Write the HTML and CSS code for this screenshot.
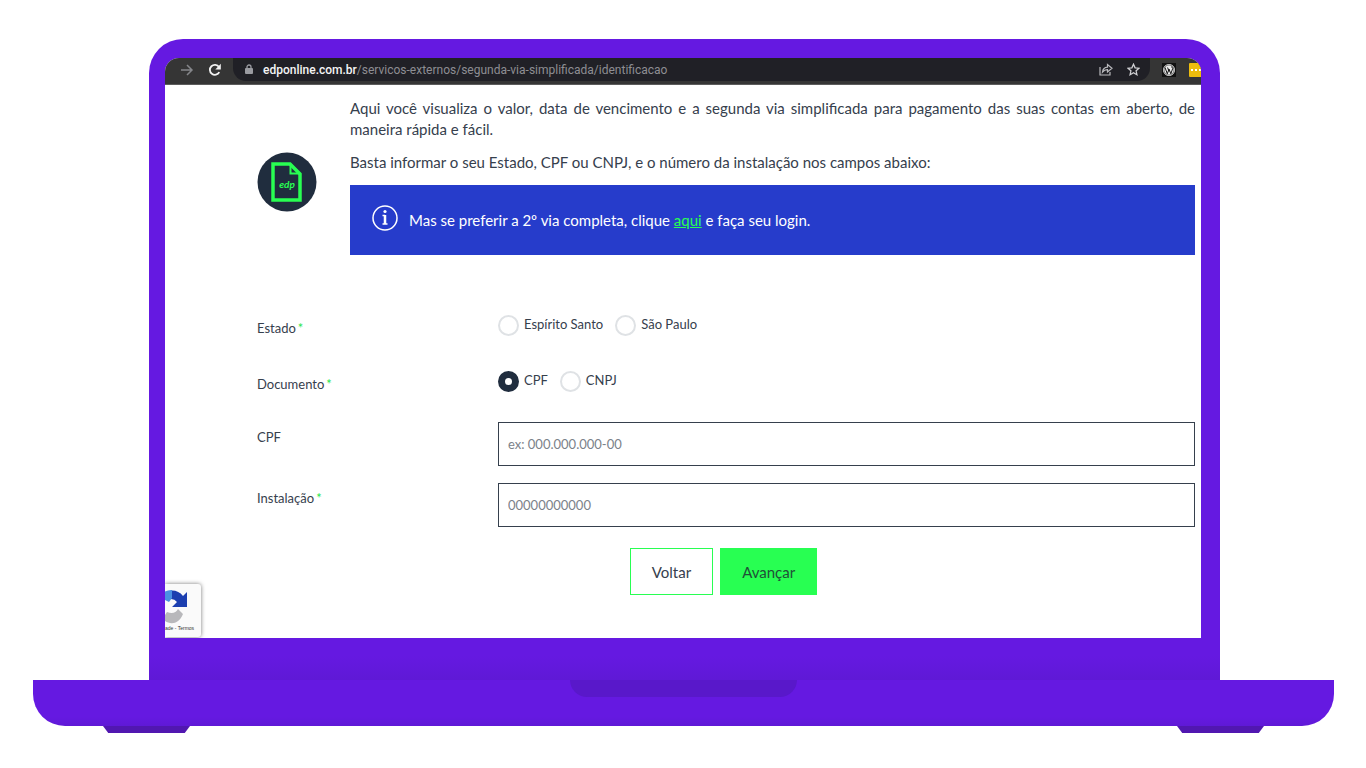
FILE: index.html
```html
<!DOCTYPE html>
<html lang="pt-BR">
<head>
<meta charset="utf-8">
<title>Segunda via simplificada</title>
<link rel="stylesheet" href="styles.css">
</head>
<body>
<div class="laptop">
  <div class="lid">
    <div class="screen">
      <header class="toolbar">
        <svg class="tool-icon" width="14" height="14" viewBox="0 0 14 14" fill="none" stroke="#85868a" stroke-width="1.5"><path d="M1 7h11M7 2l5 5-5 5"/></svg>
        <svg class="tool-icon" width="14" height="14" viewBox="0 0 14 14"><path d="M11.3 9.2A5 5 0 1 1 11 4" fill="none" stroke="#f1f1f1" stroke-width="1.8"/><path d="M12.800 .8v5.700H7.300z" fill="#f1f1f1"/></svg>
        <div class="address">
          <svg width="8" height="11" viewBox="0 0 8 11"><path d="M2 5V3a2 2 0 0 1 4 0v2" fill="none" stroke="#9a9ba1" stroke-width="1.3"/><rect y="4" width="8" height="6" rx="1" fill="#9a9ba1"/></svg>
          <span class="url"><b>edponline.com.br</b>/servicos-externos/segunda-via-simplificada/identificacao</span>
          <svg width="14" height="13" viewBox="0 0 14 13" fill="none" stroke="#b9b9bd" stroke-width="1.2"><path d="M1 4v8h10V9"/><path d="M3.500 9c.4-3.300 2.200-4.800 5-4.900V1.500L13 5.300 8.500 9V6.600C6.500 6.500 5 7.200 3.500 9z"/></svg>
          <svg width="13" height="13" viewBox="0 0 13 13" fill="none" stroke="#d0d0d3" stroke-width="1.3"><path d="M6.500 1.200l1.600 3.600 3.900.4-2.900 2.600.8 3.900-3.400-2-3.400 2 .8-3.900L1 5.200l3.900-.4z"/></svg>
        </div>
        <svg class="extension" width="14" height="14" viewBox="0 0 14 14"><path fill="#111" d="M0 0h14v14H0z"/><circle cx="7" cy="7" r="5.500" fill="#eee" stroke="#eee"/><circle cx="7" cy="7" r="5" fill="none" stroke="#222" stroke-width=".6"/><path d="M3 4.500l2.300 6.300L7 6l1.800 4.800 1.900-5.200-1.100-2M5.600 4.500L7 8.500" fill="none" stroke="#111" stroke-width="1"/></svg>
        <svg class="extension" width="14" height="14" viewBox="0 0 14 14"><rect width="14" height="14" rx="1" fill="#edbd0d"/><path d="M2 6h2v2H2zm4 0h2v2H6zm4 0h2v2h-2z" fill="#fff"/></svg>
      </header>
      <main class="page">
        <section class="intro">
          <svg class="doc-icon" width="60" height="60" viewBox="0 0 60 60"><circle cx="30" cy="30" r="29.500" fill="#202d3e"/><path d="M16 12h17l10 10v26H16z" fill="none" stroke="#28ff52" stroke-width="3.500"/><path d="M33.500 12v9.500H43" fill="none" stroke="#28ff52" stroke-width="2"/><text x="30" y="36" text-anchor="middle" class="doc-text">edp</text></svg>
          <div class="copy">
            <p class="lead">Aqui você visualiza o valor, data de vencimento e a segunda via simplificada para pagamento das suas contas em aberto, de maneira&nbsp;rápida e fácil.</p>
            <p>Basta informar o seu Estado, CPF ou CNPJ, e o número da instalação nos campos abaixo:</p>
            <div class="notice">
              <svg width="26" height="26" viewBox="0 0 26 26" fill="none" stroke="#fff"><circle cx="13" cy="13" r="12" stroke-width="1.500"/><path d="M13 10v9" stroke-width="2.500"/><path d="M10.500 10.500H13M10.500 19h5" stroke-width="1.300"/><circle cx="13" cy="6.500" r="1.600" fill="#fff" stroke="none"/></svg>
              <span>Mas se preferir a 2º via completa, clique <a href="#">aqui</a> e faça seu login.</span>
            </div>
          </div>
        </section>
        <form class="form">
          <div class="row choice" role="radiogroup" aria-labelledby="estado">
            <span class="label" id="estado">Estado<i>*</i></span>
            <div class="radios">
              <label><input type="radio" name="estado"><span>Espírito Santo</span></label>
              <label><input type="radio" name="estado"><span>São Paulo</span></label>
            </div>
          </div>
          <div class="row choice" role="radiogroup" aria-labelledby="documento">
            <span class="label" id="documento">Documento<i>*</i></span>
            <div class="radios">
              <label><input type="radio" name="documento" checked><span>CPF</span></label>
              <label><input type="radio" name="documento"><span>CNPJ</span></label>
            </div>
          </div>
          <div class="row field">
            <label class="label" for="cpf">CPF</label>
            <input class="text-box" id="cpf" type="text" placeholder="ex: 000.000.000-00">
          </div>
          <div class="row field">
            <label class="label" for="instalacao">Instalação<i>*</i></label>
            <input class="text-box" id="instalacao" type="text" placeholder="00000000000">
          </div>
          <div class="actions">
            <button class="button plain" type="button">Voltar</button>
            <button class="button solid" type="button">Avançar</button>
          </div>
        </form>
      </main>
      <aside class="badge">
        <svg width="36" height="53" viewBox="0 0 36 53"><path d="M6 6.500A14 14 0 0 1 18 12l4-4v15H7l5-5a8 8 0 0 0-6-3z" fill="#1c3fb0"/><path d="M0 7.500a14 14 0 0 1 7-1.500v8L4 18l-4-2z" fill="#4a90e2"/><path d="M0 31l2-3c5 2 9 1 11-3l5 5C14 40 6 41 0 37z" fill="#b8b8bb"/><text x="0" y="46" class="badge-text">ade - Termos</text></svg>
      </aside>
    </div>
  </div>
  <div class="base"><div class="notch"></div></div>
  <div class="feet"><div class="foot"></div><div class="foot"></div></div>
</div>
</body>
</html>
```
FILE: styles.css
```css
* { box-sizing: border-box; }
body { margin: 0; background: #fff; color: #36404d; font-family: Lato, "Open Sans", sans-serif; font-size: 13px; }
.laptop { padding: 39px 32px 34px 33px; }
.lid { margin: 0 114px 0 116px; padding: 19px 19px 42px 16px; border-radius: 34px 34px 0 0; background: linear-gradient(#6519e1 calc(100% - 24px), #5f19d6); }
.screen { position: relative; overflow: hidden; border-radius: 14px 14px 0 0; background: #fff; }
.toolbar { display: flex; align-items: center; height: 27px; padding-left: 15px; background: #353535; border-bottom: 1px solid #5c5c5c; overflow: hidden; }
.toolbar svg { flex: none; }
.toolbar > svg { margin-bottom: 3px; }
.tool-icon { margin-right: 14px; }
.address { flex: 1; display: flex; align-items: center; gap: 14px; height: 23px; margin: 0 12px 3px -3px; padding: 0 10px 0 12px; border-radius: 0 0 13px 13px; background: #202026; font: 12px/20px Roboto, sans-serif; }
.url { flex: 1; margin-left: -4px; color: #8e8e93; white-space: nowrap; }
.url b { font-weight: 500; color: #f4f4f4; }
.extension { margin-right: 13px; }
.extension:last-child { margin-right: -2px; }
.page { padding: 13px 6px 43px 92px; }
.intro { display: grid; grid-template-columns: 60px 1fr; column-gap: 33px; font-size: 15px; }
.doc-icon { margin-top: 54px; }
.doc-text { fill: #28ff52; font: italic bold 10px Lato, sans-serif; }
p { margin: 0 0 12px; line-height: 21px; }
.lead { text-align: justify; }
.notice { display: flex; align-items: center; gap: 11px; height: 70px; padding: 0 22px 4px; background: #263ccb; color: #fff; }
.notice span { padding-top: 4px; }
.notice a { color: #28ff52; }
.form { margin-top: 56px; line-height: 20px; }
.row { display: grid; grid-template-columns: 241px 1fr; }
.choice { height: 56px; }
.choice + .field { margin-top: -1px; }
.choice .label { padding-top: 7px; }
.label i { margin-left: 2px; color: #28e64e; font-style: normal; }
.radios { display: flex; gap: 12px; align-items: flex-start; }
.radios label { display: flex; gap: 5px; }
.radios label span { padding-top: 3px; }
.radios input { appearance: none; width: 21px; height: 21px; margin: 4px 0 0; border: 2px solid #dfe2e5; border-radius: 50%; background: #fff; }
.radios input:checked { border: 7px solid #202d3e; }
.field { margin-bottom: 17px; }
.field .label { padding-top: 5px; }
.text-box { width: 100%; height: 44px; padding: 0 9px; border: 1px solid #36404d; border-radius: 0; background: #fff; color: #36404d; font: inherit; }
.text-box::placeholder { color: #7b828a; opacity: 1; }
.actions { display: flex; gap: 7px; justify-content: center; padding: 4px 5px 0 0; }
.button { height: 47px; padding: 0 21px; border: 1px solid #28ff52; border-radius: 0; font: 15px Lato, sans-serif; color: #36404d; }
.plain { background: #fff; }
.solid { background: #28ff52; color: #205038; }
.badge { position: absolute; left: 0; bottom: 1px; width: 36px; height: 53px; border-radius: 0 3px 3px 0; background: #fafafa; box-shadow: 0 0 4px #777; overflow: hidden; }
.badge-text { fill: #333; font: 5px "Liberation Sans", sans-serif; }
.base { height: 46px; border-radius: 0 0 32px 32px; background: linear-gradient(#6519e1 80%, #5f19d6); }
.notch { width: 227px; height: 17px; margin: 0 auto; border-radius: 0 0 20px 20px; background: #5918ca; }
.feet { display: flex; justify-content: space-between; padding: 0 70px; }
.foot { width: 87px; height: 7px; background: #5117b0; clip-path: polygon(0 0, 100% 0, 94% 100%, 6% 100%); }
```
